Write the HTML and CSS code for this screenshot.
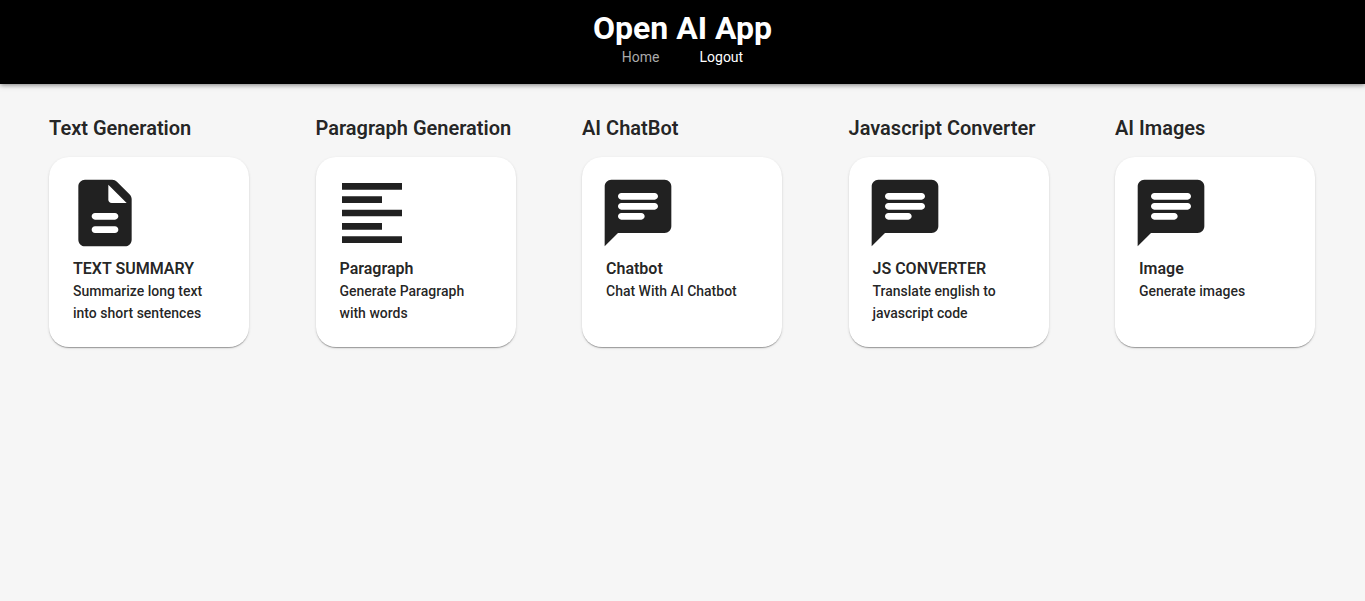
FILE: index.html
```
<!DOCTYPE html>
<html lang="en">
<head>
<meta charset="utf-8">
<title>Open AI App</title>
<link rel="stylesheet" href="styles.css">
</head>
<body>
<header class="navbar">
  <h1 class="brand">Open AI App</h1>
  <nav class="links">
    <a class="link link-muted" href="#">Home</a>
    <a class="link" href="#">Logout</a>
  </nav>
</header>
<main class="tools">
  <section class="tool">
    <h2 class="tool-title">Text Generation</h2>
    <a class="card" href="#">
      <svg class="icon" viewBox="0 0 24 24" aria-hidden="true"><path d="M14.170 2H6c-1.100 0-2 .9-2 2v16c0 1.100.9 2 2 2h12c1.100 0 2-.9 2-2V7.830c0-.53-.21-1.040-.59-1.410l-3.830-3.830C15.210 2.210 14.700 2 14.170 2zM15 18H9c-.55 0-1-.45-1-1s.45-1 1-1h6c.55 0 1 .45 1 1s-.45 1-1 1zm0-4H9c-.55 0-1-.45-1-1s.45-1 1-1h6c.55 0 1 .45 1 1s-.45 1-1 1zm-2-6V3.500L18.500 9H14c-.55 0-1-.45-1-1z"/></svg>
      <div class="card-text">
        <h3 class="card-title">TEXT SUMMARY</h3>
        <p class="card-desc">Summarize long text into short sentences</p>
      </div>
    </a>
  </section>
  <section class="tool">
    <h2 class="tool-title">Paragraph Generation</h2>
    <a class="card" href="#">
      <svg class="icon" viewBox="0 0 24 24" aria-hidden="true"><path d="M15 15H3v2h12v-2zm0-8H3v2h12V7zM3 13h18v-2H3v2zm0 8h18v-2H3v2zM3 3v2h18V3H3z"/></svg>
      <div class="card-text">
        <h3 class="card-title">Paragraph</h3>
        <p class="card-desc">Generate Paragraph with words</p>
      </div>
    </a>
  </section>
  <section class="tool">
    <h2 class="tool-title">AI ChatBot</h2>
    <a class="card" href="#">
      <svg class="icon" viewBox="0 0 24 24" aria-hidden="true"><path d="M20 2H4c-1.100 0-1.990.9-1.990 2L2 22l4-4h14c1.100 0 2-.9 2-2V4c0-1.100-.9-2-2-2zm-7 12H7c-.55 0-1-.45-1-1s.45-1 1-1h6c.55 0 1 .45 1 1s-.45 1-1 1zm4-3H7c-.55 0-1-.45-1-1s.45-1 1-1h10c.55 0 1 .45 1 1s-.45 1-1 1zm0-3H7c-.55 0-1-.45-1-1s.45-1 1-1h10c.55 0 1 .45 1 1s-.45 1-1 1z"/></svg>
      <div class="card-text">
        <h3 class="card-title">Chatbot</h3>
        <p class="card-desc">Chat With AI Chatbot</p>
      </div>
    </a>
  </section>
  <section class="tool">
    <h2 class="tool-title">Javascript Converter</h2>
    <a class="card" href="#">
      <svg class="icon" viewBox="0 0 24 24" aria-hidden="true"><path d="M20 2H4c-1.100 0-1.990.9-1.990 2L2 22l4-4h14c1.100 0 2-.9 2-2V4c0-1.100-.9-2-2-2zm-7 12H7c-.55 0-1-.45-1-1s.45-1 1-1h6c.55 0 1 .45 1 1s-.45 1-1 1zm4-3H7c-.55 0-1-.45-1-1s.45-1 1-1h10c.55 0 1 .45 1 1s-.45 1-1 1zm0-3H7c-.55 0-1-.45-1-1s.45-1 1-1h10c.55 0 1 .45 1 1s-.45 1-1 1z"/></svg>
      <div class="card-text">
        <h3 class="card-title">JS CONVERTER</h3>
        <p class="card-desc">Translate english to javascript code</p>
      </div>
    </a>
  </section>
  <section class="tool">
    <h2 class="tool-title">AI Images</h2>
    <a class="card" href="#">
      <svg class="icon" viewBox="0 0 24 24" aria-hidden="true"><path d="M20 2H4c-1.100 0-1.990.9-1.990 2L2 22l4-4h14c1.100 0 2-.9 2-2V4c0-1.100-.9-2-2-2zm-7 12H7c-.55 0-1-.45-1-1s.45-1 1-1h6c.55 0 1 .45 1 1s-.45 1-1 1zm4-3H7c-.55 0-1-.45-1-1s.45-1 1-1h10c.55 0 1 .45 1 1s-.45 1-1 1zm0-3H7c-.55 0-1-.45-1-1s.45-1 1-1h10c.55 0 1 .45 1 1s-.45 1-1 1z"/></svg>
      <div class="card-text">
        <h3 class="card-title">Image</h3>
        <p class="card-desc">Generate images</p>
      </div>
    </a>
  </section>
</main>
</body>
</html>
```

FILE: styles.css
```
* {
  box-sizing: border-box;
}

body {
  margin: 0;
  min-height: 100vh;
  background: #f6f6f6;
  color: rgba(0, 0, 0, 0.87);
  font-family: Roboto, "Liberation Sans", sans-serif;
}

h1, h2, h3, p {
  margin: 0;
}

.navbar {
  display: flex;
  flex-direction: column;
  align-items: center;
  padding: 8px 0 18px;
  background: #000;
  color: #fff;
  box-shadow: 0 1px 5px rgba(0, 0, 0, 0.5);
}

.brand {
  font-size: 32px;
  line-height: 40px;
  font-weight: 700;
}

.links {
  display: flex;
  gap: 40px;
}

.link {
  color: #fff;
  font-size: 14px;
  line-height: 18px;
  text-decoration: none;
}

.link-muted {
  color: #aaa;
}

.tools {
  display: flex;
  flex-wrap: wrap;
  justify-content: space-between;
  gap: 32px;
  padding: 28px 50px 28px 49px;
}

.tool {
  width: 200px;
}

.tool-title {
  margin-bottom: 13px;
  font-size: 20px;
  line-height: 32px;
  font-weight: 600;
  white-space: nowrap;
}

.card {
  display: block;
  min-height: 190px;
  padding: 16px;
  border-radius: 20px;
  background: #fff;
  color: inherit;
  text-decoration: none;
  box-shadow: 0 2px 1px -1px rgba(0, 0, 0, 0.2), 0 1px 1px rgba(0, 0, 0, 0.14), 0 1px 3px rgba(0, 0, 0, 0.12);
}

.icon {
  display: block;
  width: 80px;
  height: 80px;
  fill: currentColor;
}

.card-text {
  padding: 4px 8px;
}

.card-title {
  font-size: 16px;
  line-height: 23px;
  font-weight: 600;
}

.card-desc {
  font-size: 14px;
  line-height: 22px;
  font-weight: 500;
}
```
